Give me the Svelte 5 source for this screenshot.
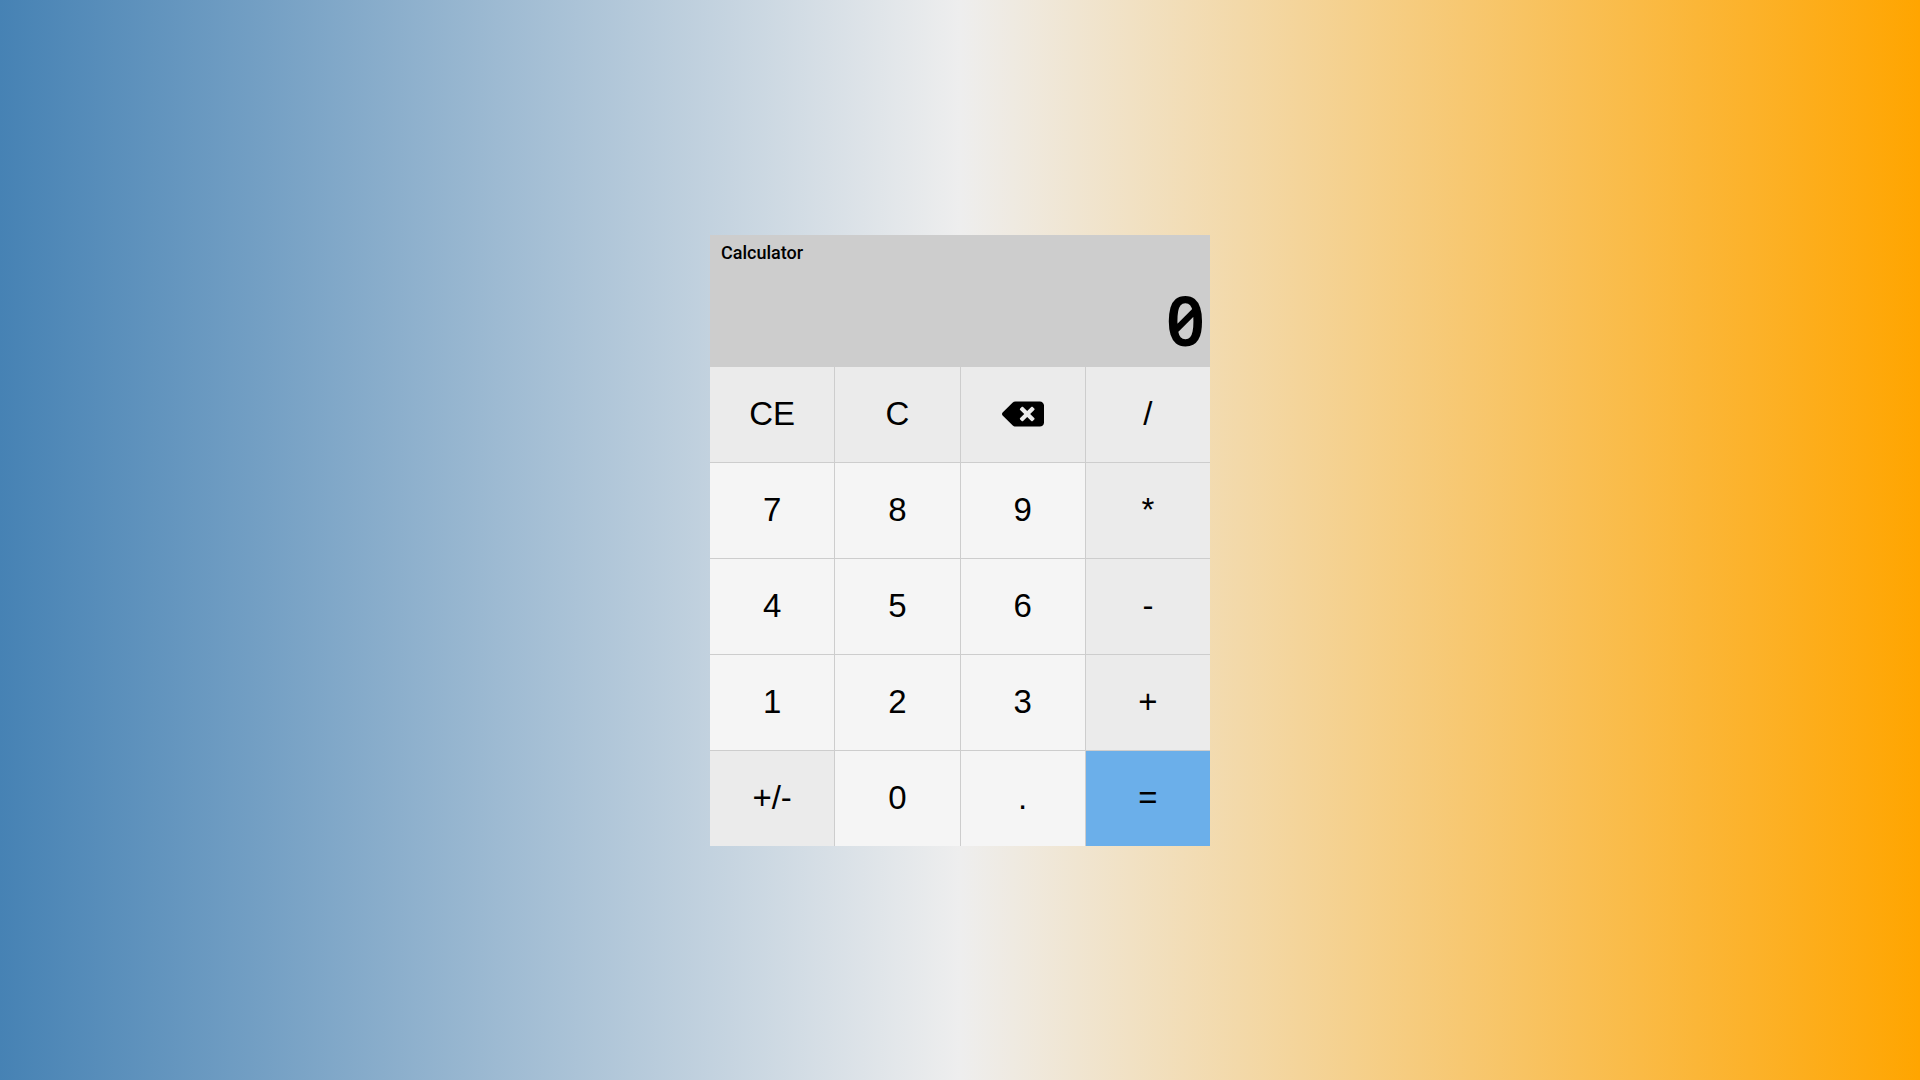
<script>
  const keys = [
    ['CE', 'fn'], ['C', 'fn'], ['back', 'fn'], ['/', 'fn'],
    ['7', ''], ['8', ''], ['9', ''], ['*', 'fn'],
    ['4', ''], ['5', ''], ['6', ''], ['-', 'fn'],
    ['1', ''], ['2', ''], ['3', ''], ['+', 'fn'],
    ['+/-', 'fn'], ['0', ''], ['.', ''], ['=', 'equals'],
  ];
</script>

<main>
  <section class="calculator" aria-label="Calculator">
    <header>
      <h1>Calculator</h1>
      <output>0</output>
    </header>
    <div class="keys">
      {#each keys as [label, kind]}
        {#if label === 'back'}
          <button class={kind} aria-label="Backspace">
            <svg viewBox="0 0 640 512" aria-hidden="true">
              <path d="M576 64H205.26A63.97 63.97 0 0 0 160 82.75L9.37 233.37c-12.5 12.5-12.5 32.76 0 45.25L160 429.25c12 12 28.28 18.75 45.25 18.75H576c35.35 0 64-28.65 64-64V128c0-35.35-28.65-64-64-64zm-84.69 254.06c6.25 6.25 6.25 16.38 0 22.63l-22.62 22.62c-6.25 6.25-16.38 6.25-22.63 0L384 301.25l-62.06 62.06c-6.25 6.25-16.38 6.25-22.63 0l-22.62-22.62c-6.25-6.25-6.25-16.38 0-22.63L338.75 256l-62.06-62.06c-6.25-6.25-6.25-16.38 0-22.63l22.62-22.62c6.25-6.25 16.38-6.25 22.63 0L384 210.75l62.06-62.06c6.25-6.25 16.38-6.25 22.63 0l22.62 22.62c6.25 6.25 6.25 16.38 0 22.63L429.25 256l62.06 62.06z" />
            </svg>
          </button>
        {:else}
          <button class={kind}>{label}</button>
        {/if}
      {/each}
    </div>
  </section>
</main>

<style>
  :global(body) {
    margin: 0;
  }
  main {
    min-height: 100vh;
    display: grid;
    place-items: center;
    background: linear-gradient(to right, steelblue, #eee, orange);
  }
  .calculator {
    width: 500px;
    background: #cdcdcd;
  }
  header {
    display: flex;
    flex-direction: column;
    gap: 10px;
    padding-top: 8px;
  }
  h1 {
    margin: 0 11px;
    font: 500 18px/20px Roboto, sans-serif;
  }
  output {
    font: 600 68px/94px "Noto Sans", sans-serif;
    font-feature-settings: "zero" 1;
    text-align: right;
    padding-right: 5px;
  }
  .keys {
    display: grid;
    grid-template-columns: repeat(4, 1fr);
    grid-auto-rows: 95px;
    gap: 1px;
  }
  button {
    display: flex;
    align-items: center;
    justify-content: center;
    padding: 0;
    border: 0;
    background: #f5f5f5;
    color: #000;
    font: 33px/36px "Liberation Sans", Arial, sans-serif;
  }
  .fn {
    background: #ebebeb;
  }
  .equals {
    background: #6bafea;
  }
  svg {
    width: 42px;
    height: 34px;
  }
</style>
